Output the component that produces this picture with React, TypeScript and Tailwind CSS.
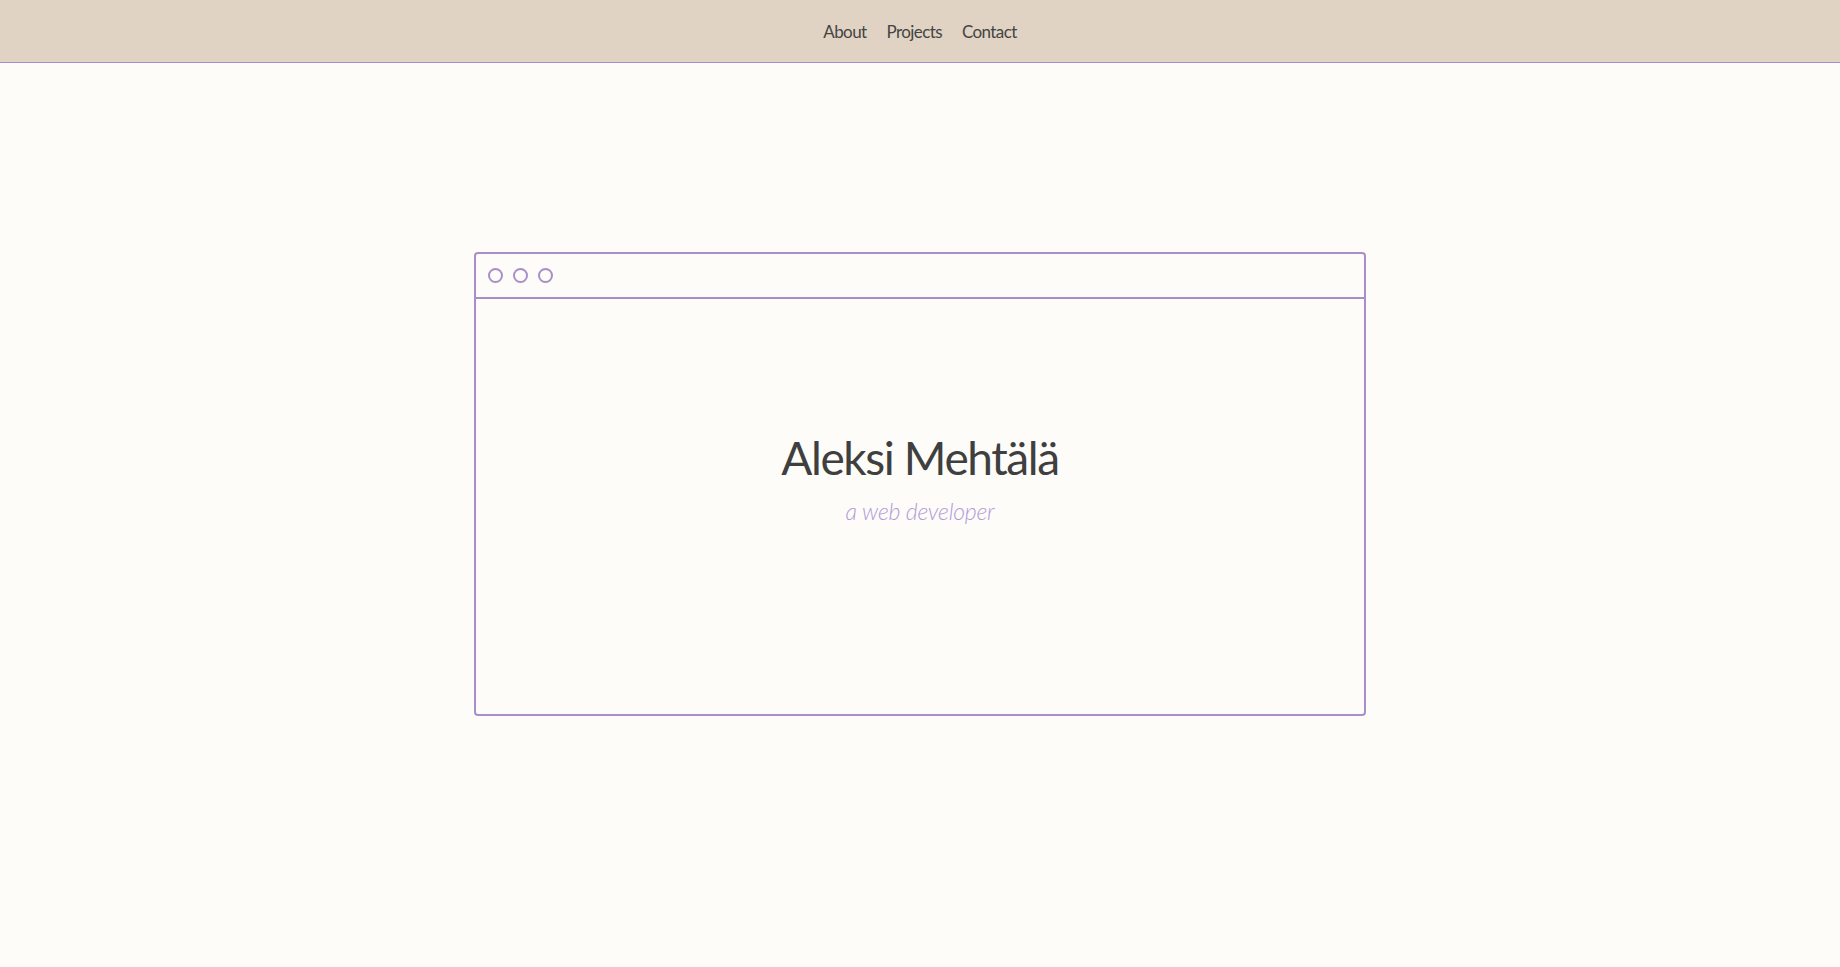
import React from "react";

export default function App() {
  return (
    <div className="min-h-screen bg-[#fdfcf8] text-[#3f3f3f]" style={{ fontFamily: 'Lato, "Open Sans", sans-serif' }}>
      <nav className="h-[63px] pt-[2px] bg-[#e0d3c3] border-b border-[#a48fd0] flex items-center justify-center gap-[20px] text-[17px] tracking-[-0.6px] text-[#444]">
        <a>About</a>
        <a>Projects</a>
        <a>Contact</a>
      </nav>
      <div className="mx-auto mt-[189px] w-[892px] h-[464px] border-2 border-[#a98fc9] rounded-[4px] flex flex-col">
        <div className="h-[45px] shrink-0 border-b-2 border-[#a98fc9] flex items-center gap-[10px] pl-[12px]">
          <span className="w-[15px] h-[15px] rounded-full border-2 border-[#a98fc9]" />
          <span className="w-[15px] h-[15px] rounded-full border-2 border-[#a98fc9]" />
          <span className="w-[15px] h-[15px] rounded-full border-2 border-[#a98fc9]" />
        </div>
        <div className="flex-1 flex flex-col items-center pt-[136px]">
          <h1 className="text-[46px] leading-none tracking-[-1.4px]">Aleksi Mehtälä</h1>
          <p className="mt-[19px] text-[23px] leading-none italic font-light tracking-[-0.2px] text-[#b09bd8]">a web developer</p>
        </div>
      </div>
    </div>
  );
}
